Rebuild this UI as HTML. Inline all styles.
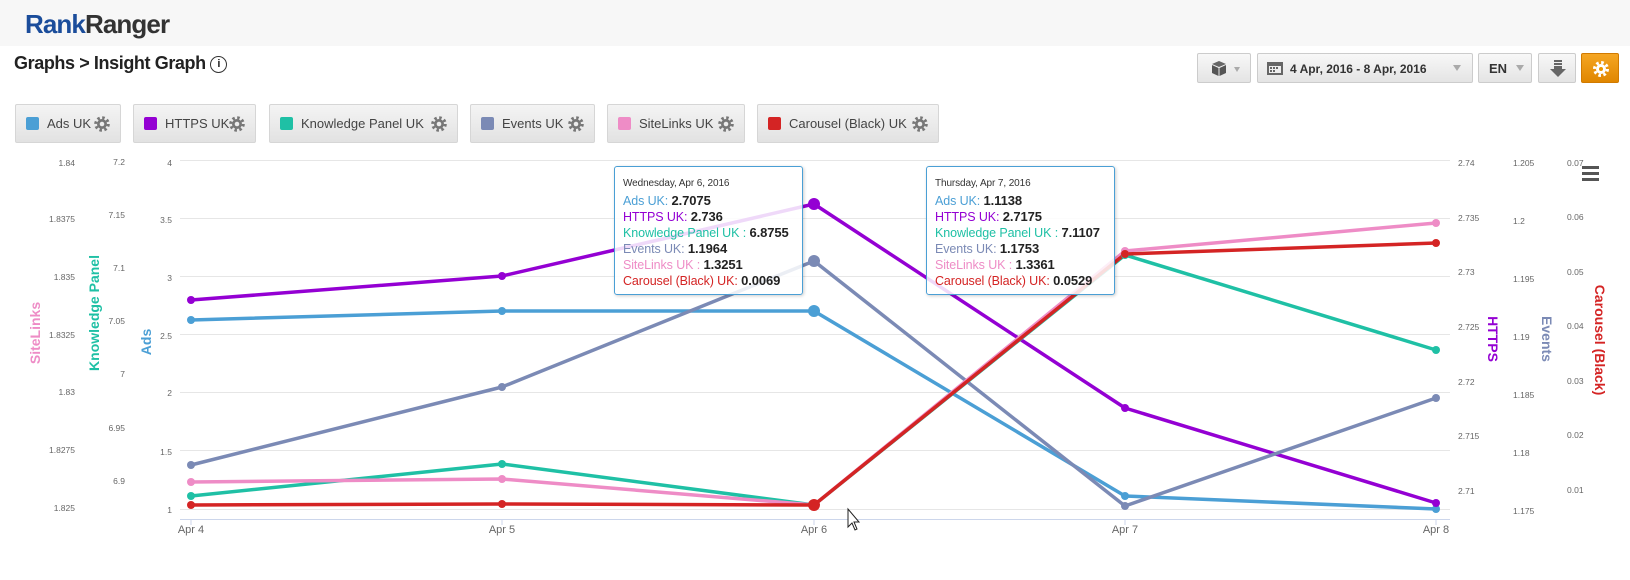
<!DOCTYPE html>
<html><head><meta charset="utf-8"><style>
*{margin:0;padding:0;box-sizing:border-box}
body{width:1630px;height:580px;background:#fff;font-family:"Liberation Sans",sans-serif;position:relative;overflow:hidden}
.hdr{position:absolute;left:0;top:0;width:1630px;height:46px;background:#f7f7f7}
.logo{position:absolute;left:25px;top:9px;font-size:26px;font-weight:bold;letter-spacing:-0.9px}
.title{position:absolute;left:14px;top:53px;font-size:18px;font-weight:bold;color:#222;letter-spacing:-0.4px}
.btn{position:absolute;top:53px;height:30px;border:1px solid #ccc;border-radius:2px;background:linear-gradient(#f8f8f8,#e4e4e4)}
.leg{position:absolute;top:104px;height:39px;border:1px solid #d6d6d6;border-radius:2px;background:linear-gradient(#f4f4f4,#e2e2e2);font-size:13px;color:#444;display:flex;align-items:center;padding-left:10px;white-space:nowrap}
.sw{width:13px;height:13px;border-radius:2px;margin-right:8px;flex:none}
.gear{margin-left:auto;margin-right:10px;flex:none}
.tt{position:absolute;top:166px;height:129px;border:1px solid #4a9fd5;border-radius:3px;background:rgba(255,255,255,0.85);padding:9px 0 0 8px;font-size:12.5px;line-height:16px;box-shadow:1px 1px 3px rgba(0,0,0,.2);white-space:nowrap;letter-spacing:-0.1px}
.tt .d{font-size:10px;color:#333;margin-bottom:1px}
.tt b{color:#222;font-size:13px}
</style></head><body>
<div class="hdr"><div class="logo"><span style="color:#1b4d9b">Rank</span><span style="color:#333">Ranger</span></div></div>
<div class="title">Graphs &gt; Insight Graph <span style="display:inline-block;width:17px;height:17px;border:1.5px solid #333;border-radius:50%;font-size:11px;text-align:center;line-height:14px;vertical-align:2px;letter-spacing:0">i</span></div>

<div class="btn" style="left:1197px;width:54px"><svg width="54" height="30"><path d="M14 10 L21 7 L28 10 L21 13Z" fill="#666"/><path d="M14 11 L20.5 14 L20.5 22 L14 19Z M21.5 14 L28 11 L28 19 L21.5 22Z" fill="#555"/><path d="M36 13 L42 13 L39 18Z" fill="#aaa"/></svg></div>
<div class="btn" style="left:1257px;width:216px;font-size:12px;font-weight:bold;color:#333"><svg width="20" height="16" style="position:absolute;left:8px;top:7px"><rect x="1" y="1" width="16" height="13" fill="#666"/><rect x="3" y="5" width="12" height="7" fill="#eee"/><rect x="4" y="6" width="2" height="2" fill="#666"/><rect x="7" y="6" width="2" height="2" fill="#666"/><rect x="10" y="6" width="2" height="2" fill="#666"/><rect x="4" y="9" width="2" height="2" fill="#666"/><rect x="7" y="9" width="2" height="2" fill="#666"/></svg><span style="position:absolute;left:32px;top:8px">4 Apr, 2016 - 8 Apr, 2016</span><svg width="10" height="8" style="position:absolute;left:195px;top:11px"><path d="M0 0 L8 0 L4 6Z" fill="#aaa"/></svg></div>
<div class="btn" style="left:1478px;width:54px;font-size:13px;font-weight:bold;color:#333"><span style="position:absolute;left:10px;top:7px">EN</span><svg width="10" height="8" style="position:absolute;left:37px;top:11px"><path d="M0 0 L8 0 L4 6Z" fill="#aaa"/></svg></div>
<div class="btn" style="left:1538px;width:38px"><svg width="38" height="30"><rect x="15" y="6" width="8" height="2" fill="#666"/><rect x="15" y="9" width="8" height="2" fill="#666"/><path d="M15 12 L23 12 L23 15 L27 15 L19 23 L11 15 L15 15Z" fill="#666"/></svg></div>
<div class="btn" style="left:1581px;width:38px;background:linear-gradient(#f5a623,#e08600);border-color:#d17a00"><svg width="38" height="30"><circle cx="19" cy="15" r="6.5" fill="none" stroke="#fff" stroke-width="3" stroke-dasharray="2.6 2.5"/><circle cx="19" cy="15" r="5" fill="#fff"/><circle cx="19" cy="15" r="2" fill="#eb9600"/></svg></div>

<svg width="0" height="0" style="position:absolute"><defs><g id="g"><circle cx="8" cy="8" r="6.3" fill="none" stroke="#777" stroke-width="3" stroke-dasharray="2.5 2.45"/><circle cx="8" cy="8" r="5" fill="#777"/><circle cx="8" cy="8" r="2.3" fill="#ececec"/></g></defs></svg>
<div class="leg" style="left:15px;width:106px"><div class="sw" style="background:#4b9fd5"></div>Ads UK<svg class="gear" width="16" height="16"><use href="#g"/></svg></div>
<div class="leg" style="left:133px;width:123px"><div class="sw" style="background:#9400d3"></div>HTTPS UK<svg class="gear" width="16" height="16"><use href="#g"/></svg></div>
<div class="leg" style="left:269px;width:189px"><div class="sw" style="background:#1fc0a5"></div>Knowledge Panel UK<svg class="gear" width="16" height="16"><use href="#g"/></svg></div>
<div class="leg" style="left:470px;width:125px"><div class="sw" style="background:#7b8ab5"></div>Events UK<svg class="gear" width="16" height="16"><use href="#g"/></svg></div>
<div class="leg" style="left:607px;width:138px"><div class="sw" style="background:#ee8cc6"></div>SiteLinks UK<svg class="gear" width="16" height="16"><use href="#g"/></svg></div>
<div class="leg" style="left:757px;width:182px"><div class="sw" style="background:#d42424"></div>Carousel (Black) UK<svg class="gear" width="16" height="16"><use href="#g"/></svg></div>

<svg width="1630" height="580" style="position:absolute;left:0;top:0" font-family="Liberation Sans, sans-serif">
<g stroke="#e6e6e6" stroke-width="1">
<line x1="180" x2="1450" y1="160.5" y2="160.5"/><line x1="180" x2="1450" y1="218.5" y2="218.5"/><line x1="180" x2="1450" y1="276.5" y2="276.5"/><line x1="180" x2="1450" y1="334.5" y2="334.5"/><line x1="180" x2="1450" y1="392.5" y2="392.5"/><line x1="180" x2="1450" y1="450.5" y2="450.5"/><line x1="180" x2="1450" y1="509.5" y2="509.5"/>
</g>
<line x1="180" x2="1450" y1="519.5" y2="519.5" stroke="#ccd6eb"/>
<g stroke="#ccd6eb"><line x1="191" x2="191" y1="519" y2="525"/><line x1="502" x2="502" y1="519" y2="525"/><line x1="814" x2="814" y1="519" y2="525"/><line x1="1125" x2="1125" y1="519" y2="525"/><line x1="1436" x2="1436" y1="519" y2="525"/></g>
<g font-size="11" fill="#666" text-anchor="middle"><text x="191" y="533">Apr 4</text><text x="502" y="533">Apr 5</text><text x="814" y="533">Apr 6</text><text x="1125" y="533">Apr 7</text><text x="1436" y="533">Apr 8</text></g>
<g font-size="8.5" fill="#666" text-anchor="end">
<text x="75" y="166">1.84</text><text x="75" y="222">1.8375</text><text x="75" y="280">1.835</text><text x="75" y="338">1.8325</text><text x="75" y="395">1.83</text><text x="75" y="453">1.8275</text><text x="75" y="511">1.825</text>
<text x="125" y="165">7.2</text><text x="125" y="218">7.15</text><text x="125" y="271">7.1</text><text x="125" y="324">7.05</text><text x="125" y="377">7</text><text x="125" y="431">6.95</text><text x="125" y="484">6.9</text>
<text x="172" y="166">4</text><text x="172" y="223">3.5</text><text x="172" y="281">3</text><text x="172" y="339">2.5</text><text x="172" y="396">2</text><text x="172" y="455">1.5</text><text x="172" y="513">1</text>
</g>
<g font-size="8.5" fill="#666">
<text x="1458" y="166">2.74</text><text x="1458" y="221">2.735</text><text x="1458" y="275">2.73</text><text x="1458" y="330">2.725</text><text x="1458" y="385">2.72</text><text x="1458" y="439">2.715</text><text x="1458" y="494">2.71</text>
<text x="1513" y="166">1.205</text><text x="1513" y="224">1.2</text><text x="1513" y="282">1.195</text><text x="1513" y="340">1.19</text><text x="1513" y="398">1.185</text><text x="1513" y="456">1.18</text><text x="1513" y="514">1.175</text>
<text x="1567" y="166">0.07</text><text x="1567" y="220">0.06</text><text x="1567" y="275">0.05</text><text x="1567" y="329">0.04</text><text x="1567" y="384">0.03</text><text x="1567" y="438">0.02</text><text x="1567" y="493">0.01</text>
</g>
<g font-size="14" font-weight="bold" text-anchor="middle">
<text transform="translate(40,333) rotate(-90)" fill="#ee8cc6">SiteLinks</text>
<text transform="translate(99,313) rotate(-90)" fill="#1fc0a5">Knowledge Panel</text>
<text transform="translate(151,342) rotate(-90)" fill="#4b9fd5">Ads</text>
<text transform="translate(1488,339) rotate(90)" fill="#9400d3">HTTPS</text>
<text transform="translate(1542,339) rotate(90)" fill="#7b8ab5">Events</text>
<text transform="translate(1595,340) rotate(90)" fill="#d42424">Carousel (Black)</text>
</g>
<g fill="#555"><rect x="1582" y="166" width="17" height="3"/><rect x="1582" y="172" width="17" height="3"/><rect x="1582" y="178" width="17" height="3"/></g>
<g fill="none" stroke-width="3.5" stroke-linejoin="round">
<polyline stroke="#4b9fd5" points="191,320 502,311 814,311 1125,496 1436,509"/>
<polyline stroke="#9400d3" points="191,300 502,276 814,204 1125,408 1436,503"/>
<polyline stroke="#7b8ab5" points="191,465 502,387 814,261 1125,506 1436,398"/>
<polyline stroke="#1fc0a5" points="191,496 502,464 814,505 1125,255 1436,350"/>
<polyline stroke="#ee8cc6" points="191,482 502,479 814,505 1125,251 1436,223"/>
<polyline stroke="#d42424" points="191,505 502,504 814,505 1125,254 1436,243"/>
</g>
<g fill="#4b9fd5"><circle cx="191" cy="320" r="4"/><circle cx="502" cy="311" r="4"/><circle cx="814" cy="311" r="6"/><circle cx="1125" cy="496" r="4"/><circle cx="1436" cy="509" r="4"/></g>
<g fill="#9400d3"><circle cx="191" cy="300" r="4"/><circle cx="502" cy="276" r="4"/><circle cx="814" cy="204" r="6"/><circle cx="1125" cy="408" r="4"/><circle cx="1436" cy="503" r="4"/></g>
<g fill="#7b8ab5"><circle cx="191" cy="465" r="4"/><circle cx="502" cy="387" r="4"/><circle cx="814" cy="261" r="6"/><circle cx="1125" cy="506" r="4"/><circle cx="1436" cy="398" r="4"/></g>
<g fill="#1fc0a5"><circle cx="191" cy="496" r="4"/><circle cx="502" cy="464" r="4"/><circle cx="1125" cy="255" r="4"/><circle cx="1436" cy="350" r="4"/></g>
<g fill="#ee8cc6"><circle cx="191" cy="482" r="4"/><circle cx="502" cy="479" r="4"/><circle cx="1125" cy="251" r="4"/><circle cx="1436" cy="223" r="4"/></g>
<g fill="#d42424"><circle cx="191" cy="505" r="4"/><circle cx="502" cy="504" r="4"/><circle cx="814" cy="505" r="6"/><circle cx="1125" cy="254" r="4"/><circle cx="1436" cy="243" r="4"/></g>
<path d="M848 509 L848 527 L852 523 L855 530 L857 529 L854 522 L859 522Z" fill="#fff" stroke="#222" stroke-width="1"/>
</svg>

<div class="tt" style="left:614px;width:189px">
<div class="d">Wednesday, Apr 6, 2016</div>
<div><span style="color:#4b9fd5">Ads UK: </span><b>2.7075</b></div>
<div><span style="color:#9400d3">HTTPS UK: </span><b>2.736</b></div>
<div><span style="color:#1fc0a5">Knowledge Panel UK : </span><b>6.8755</b></div>
<div><span style="color:#7b8ab5">Events UK: </span><b>1.1964</b></div>
<div><span style="color:#ee8cc6">SiteLinks UK : </span><b>1.3251</b></div>
<div><span style="color:#d42424">Carousel (Black) UK: </span><b>0.0069</b></div>
</div>
<div class="tt" style="left:926px;width:189px">
<div class="d">Thursday, Apr 7, 2016</div>
<div><span style="color:#4b9fd5">Ads UK: </span><b>1.1138</b></div>
<div><span style="color:#9400d3">HTTPS UK: </span><b>2.7175</b></div>
<div><span style="color:#1fc0a5">Knowledge Panel UK : </span><b>7.1107</b></div>
<div><span style="color:#7b8ab5">Events UK: </span><b>1.1753</b></div>
<div><span style="color:#ee8cc6">SiteLinks UK : </span><b>1.3361</b></div>
<div><span style="color:#d42424">Carousel (Black) UK: </span><b>0.0529</b></div>
</div>
</body></html>
